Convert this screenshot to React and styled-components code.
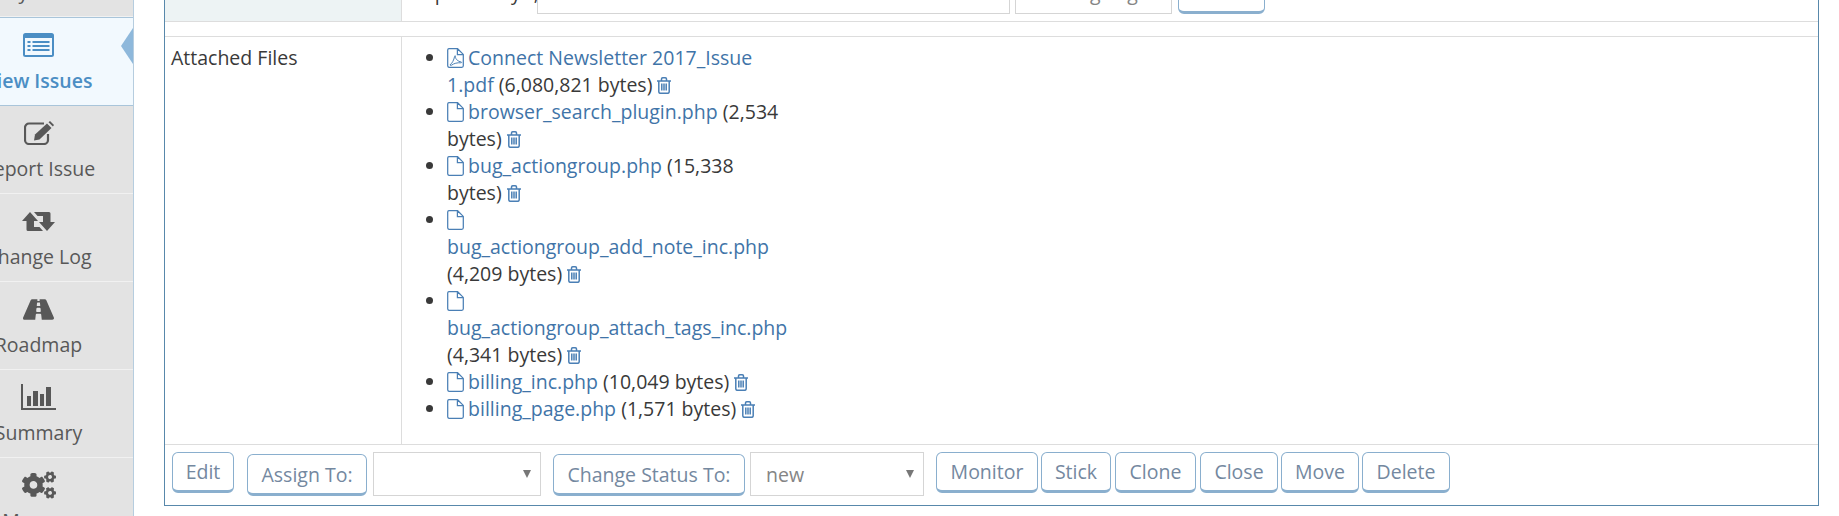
import React from "react";
import styled, { createGlobalStyle } from "styled-components";
import { FaRoad, FaCogs } from "react-icons/fa";

const Global = createGlobalStyle`
  html, body { margin: 0; padding: 0; background: #fff; overflow: hidden; }
  body { font-family: "Open Sans", "Noto Sans", sans-serif; font-size: 19.5px; line-height: 27px; color: #393939; }
  * { box-sizing: border-box; }
`;

const Page = styled.div`
  display: flex;
  width: 1839px;
  height: 516px;
  overflow: hidden;
`;
const Sidebar = styled.nav`
  flex: none;
  width: 134px;
  height: 516px;
  overflow: hidden;
  background: #e3e3e3;
  border-right: 1px solid #b6cddf;
`;
const NavList = styled.ul`
  list-style: none;
  margin: -71px 0 0 -56px;
  padding: 0;
  width: 189px;
`;
const NavItem = styled.li`
  position: relative;
  height: ${(p) => (p.$active ? 89 : 88)}px;
  padding-top: 9px;
  display: flex;
  flex-direction: column;
  align-items: center;
  border-bottom: 1px solid ${(p) => (p.$active ? "#a9c5da" : "#f1f1f1")};
  border-top: ${(p) => (p.$active ? "1px solid #a9c5da" : "none")};
  background: ${(p) => (p.$active ? "#f2f9fe" : "transparent")};
  color: ${(p) => (p.$active ? "#4b8ec4" : "#585858")};
  font-weight: ${(p) => (p.$active ? 600 : 400)};
  ${(p) =>
    p.$active &&
    `&::after {
      content: "";
      position: absolute;
      right: 0;
      top: 10px;
      border: solid transparent;
      border-width: 18px 12px 18px 0;
      border-right-color: #8eb8db;
    }`}
`;
const NavIcon = styled.span`
  display: flex;
  align-items: center;
  justify-content: center;
  height: 36px;
  margin-bottom: 4px;
`;
const NavLabel = styled.span`
  white-space: nowrap;
`;

const Main = styled.main`
  flex: 1;
  min-width: 0;
  padding: 0 20px 0 30px;
`;
const Panel = styled.section`
  margin-top: -37px;
  border: 1px solid #5888ab;
  border-top: 0;
  height: 543px;
  display: flex;
  flex-direction: column;
  background: #fff;
`;
const Row = styled.div`
  display: grid;
  grid-template-columns: 237px 1fr;
  border-bottom: 1px solid #dddddd;
`;
const TopRow = styled(Row)`
  height: 59px;
`;
const Spacer = styled.div`
  height: 15px;
  border-bottom: 1px solid #dddddd;
`;
const FilesRow = styled(Row)`
  height: 408px;
`;
const HeadCell = styled.div`
  background: #edf3f4;
  border-right: 1px solid #dddddd;
`;
const LabelCell = styled.div`
  padding: 7px 6px;
  border-right: 1px solid #dddddd;
`;
const TagForm = styled.form`
  display: flex;
  align-items: flex-end;
  margin: 0;
  padding: 0 0 7px 11px;
`;
const TagHint = styled.span`
  width: 124px;
  flex: none;
  white-space: nowrap;
  margin-bottom: 8px;
`;
const TagInput = styled.input`
  width: 473px;
  height: 44px;
  flex: none;
  border: 1px solid #d5d5d5;
  background: #fff;
  margin: 0 5px 0 0;
`;
const ValueCell = styled.div`
  padding: 7px 0 0 28px;
`;
const FileList = styled.ul`
  margin: 0;
  padding: 0 0 0 17px;
  width: 359px;
  li::marker { color: #393939; }
`;
const FileLink = styled.a`
  color: #3f74a8;
  text-decoration: none;
`;
const IconSlot = styled.svg`
  display: inline-block;
  vertical-align: ${(p) => p.$drop ?? -3}px;
  width: ${(p) => p.$w}px;
  height: ${(p) => p.$h}px;
  margin-right: ${(p) => p.$pull ?? 0}px;
  fill: none;
  stroke: #4a7fb5;
  stroke-width: ${(p) => p.$stroke ?? 1.25};
`;
const Footer = styled.div`
  flex: 1;
  display: flex;
  align-items: flex-start;
  padding: 7px 0 0 7px;
`;
const Btn = styled.button`
  flex: none;
  width: ${(p) => p.$w}px;
  height: ${(p) => (p.$tall ? 42 : 41)}px;
  margin: ${(p) => (p.$tall ? "2px" : "0")} ${(p) => p.$gap ?? 4}px 0 0;
  padding: 0;
  background: #fff;
  border: 1px solid #8aafce;
  border-bottom-width: 3px;
  border-radius: 6px;
  color: #7488a0;
  font: 400 19.5px/27px "Open Sans", sans-serif;
`;
const SelectBox = styled.div`
  position: relative;
  flex: none;
  width: ${(p) => p.$w}px;
  height: 44px;
  margin-right: ${(p) => p.$gap ?? 12}px;
  padding-left: 15px;
  display: flex;
  align-items: center;
  background: #fff;
  border: 1px solid #d5d5d5;
  color: #858585;
  ${(p) =>
    p.$arrow &&
    `&::after {
      content: "";
      position: absolute;
      right: 9px;
      top: 17px;
      border: solid transparent;
      border-width: 8px 4.5px 0;
      border-top-color: #777;
    }`}
`;

const ListAltIcon = () => (
  <svg width="31" height="24" viewBox="0 0 31 24">
    <rect x="0" y="0" width="31" height="24" rx="2.5" fill="#4b8ec4" />
    <rect x="2" y="5" width="27" height="17" fill="#f2f9fe" />
    <g fill="#4b8ec4">
      <rect x="4.5" y="8" width="3" height="2" />
      <rect x="4.5" y="12" width="3" height="2" />
      <rect x="4.5" y="16" width="3" height="2" />
      <rect x="9.5" y="8" width="17" height="2" />
      <rect x="9.5" y="12" width="17" height="2" />
      <rect x="9.5" y="16" width="17" height="2" />
    </g>
  </svg>
);
const EditIcon = () => (
  <svg width="30" height="24" viewBox="0 0 30 24" fill="#585858">
    <path fill="none" stroke="#585858" strokeWidth="2.2" d="M20 2.500H5a4 4 0 0 0-4 4v12.500a4 4 0 0 0 4 4h15a4 4 0 0 0 4-4v-6" />
    <path d="M11 13.500 23 2.500 27.500 7 15.500 18.500 10 19.500Z" />
    <path d="M24.500 1.200 26 0l4 4-1.100 1.600Z" />
  </svg>
);
const RetweetIcon = () => (
  <svg width="33" height="19" viewBox="0 0 33 19" fill="#585858">
    <path d="M8 0 16 9H12V15H17.500L21 19H6Q4.500 19 4.500 17.500V9H0Z" />
    <path d="M25 19 17 10H21V4H15.500L12 0H27Q28.500 0 28.500 1.500V10H33Z" />
  </svg>
);
const ChartIcon = () => (
  <svg width="35" height="26" viewBox="0 0 35 26" fill="#585858">
    <rect x="0" y="0" width="2" height="26" />
    <rect x="0" y="24" width="35" height="2" />
    <rect x="6" y="12" width="4" height="10" />
    <rect x="12" y="7" width="5" height="15" />
    <rect x="19" y="10" width="4" height="12" />
    <rect x="25" y="3" width="5" height="19" />
  </svg>
);
const FileIcon = () => (
  <IconSlot $w={17} $h={20} $pull={-1} viewBox="0 0 17 20">
    <path d="M2 .7h8.600L16.300 6.400V17.800a1.500 1.500 0 0 1-1.500 1.500H2A1.500 1.500 0 0 1 .7 17.800V2A1.400 1.400 0 0 1 2 .7ZM10.400.9V6.600H16.200" />
  </IconSlot>
);
const PdfIcon = () => (
  <IconSlot $w={17} $h={20} $pull={-1} viewBox="0 0 17 20">
    <path d="M2 .7h8.600L16.300 6.400V17.800a1.500 1.500 0 0 1-1.500 1.500H2A1.500 1.500 0 0 1 .7 17.800V2A1.400 1.400 0 0 1 2 .7ZM10.400.9V6.600H16.200" />
    <path strokeWidth="1" d="M3 16.800c2-1 4-5 4.600-8.400.2-1.200 1-.9.9.2-.3 2.600 3 5 5.500 5.300 1 .2.700 1-.3.900-3-.3-7 .6-9 2.300-.9.700-1.600.300-1.700-.3Z" />
  </IconSlot>
);
const TrashIcon = () => (
  <IconSlot $w={14} $h={17} $drop={-2} $stroke={1.5} viewBox="0 0 14 17">
    <path d="M0 4H14M4.500 4V2A1.200 1.200 0 0 1 5.700.8H8.300A1.200 1.200 0 0 1 9.500 2V4M1.800 4V14.800A1.500 1.500 0 0 0 3.300 16.300H10.700A1.500 1.500 0 0 0 12.200 14.800V4M4.800 6.500V13.500M7 6.500V13.500M9.200 6.500V13.500" />
  </IconSlot>
);

const navItems = [
  { label: "My View", icon: null },
  { label: "View Issues", icon: <ListAltIcon />, active: true },
  { label: "Report Issue", icon: <EditIcon /> },
  { label: "Change Log", icon: <RetweetIcon /> },
  { label: "Roadmap", icon: <FaRoad size={31} /> },
  { label: "Summary", icon: <ChartIcon /> },
  { label: "Manage", icon: <FaCogs size={34} /> },
];

const files = [
  { name: "Connect Newsletter 2017_Issue 1.pdf", size: "6,080,821", pdf: true },
  { name: "browser_search_plugin.php", size: "2,534" },
  { name: "bug_actiongroup.php", size: "15,338" },
  { name: "bug_actiongroup_add_note_inc.php", size: "4,209" },
  { name: "bug_actiongroup_attach_tags_inc.php", size: "4,341" },
  { name: "billing_inc.php", size: "10,049" },
  { name: "billing_page.php", size: "1,571" },
];

export default function App() {
  return (
    <Page>
      <Global />
      <Sidebar>
        <NavList>
          {navItems.map((n) => (
            <NavItem key={n.label} $active={n.active}>
              <NavIcon>{n.icon}</NavIcon>
              <NavLabel>{n.label}</NavLabel>
            </NavItem>
          ))}
        </NavList>
      </Sidebar>
      <Main>
        <Panel>
          <TopRow>
            <HeadCell />
            <TagForm>
              <TagHint>Separate by ","</TagHint>
              <TagInput />
              <SelectBox $w={157} $gap={6}>Existing Tags</SelectBox>
              <Btn type="button" $w={87} $gap={0}>Attach</Btn>
            </TagForm>
          </TopRow>
          <Spacer />
          <FilesRow>
            <LabelCell>Attached Files</LabelCell>
            <ValueCell>
              <FileList>
                {files.map((f) => (
                  <li key={f.name}>
                    <FileLink href="#">
                      {f.pdf ? <PdfIcon /> : <FileIcon />} {f.name}
                    </FileLink>{" "}
                    ({f.size} bytes) <FileLink href="#"><TrashIcon /></FileLink>
                  </li>
                ))}
              </FileList>
            </ValueCell>
          </FilesRow>
          <Footer>
            <Btn type="button" $w={62} $gap={13}>Edit</Btn>
            <Btn type="button" $tall $w={120} $gap={6}>Assign To:</Btn>
            <SelectBox $arrow $w={168} />
            <Btn type="button" $tall $w={192} $gap={5}>Change Status To:</Btn>
            <SelectBox $arrow $w={174}>new</SelectBox>
            <Btn type="button" $w={102} $gap={3}>Monitor</Btn>
            <Btn type="button" $w={70} $gap={4}>Stick</Btn>
            <Btn type="button" $w={81} $gap={4}>Clone</Btn>
            <Btn type="button" $w={78} $gap={3}>Close</Btn>
            <Btn type="button" $w={78} $gap={3}>Move</Btn>
            <Btn type="button" $w={88}>Delete</Btn>
          </Footer>
        </Panel>
      </Main>
    </Page>
  );
}
